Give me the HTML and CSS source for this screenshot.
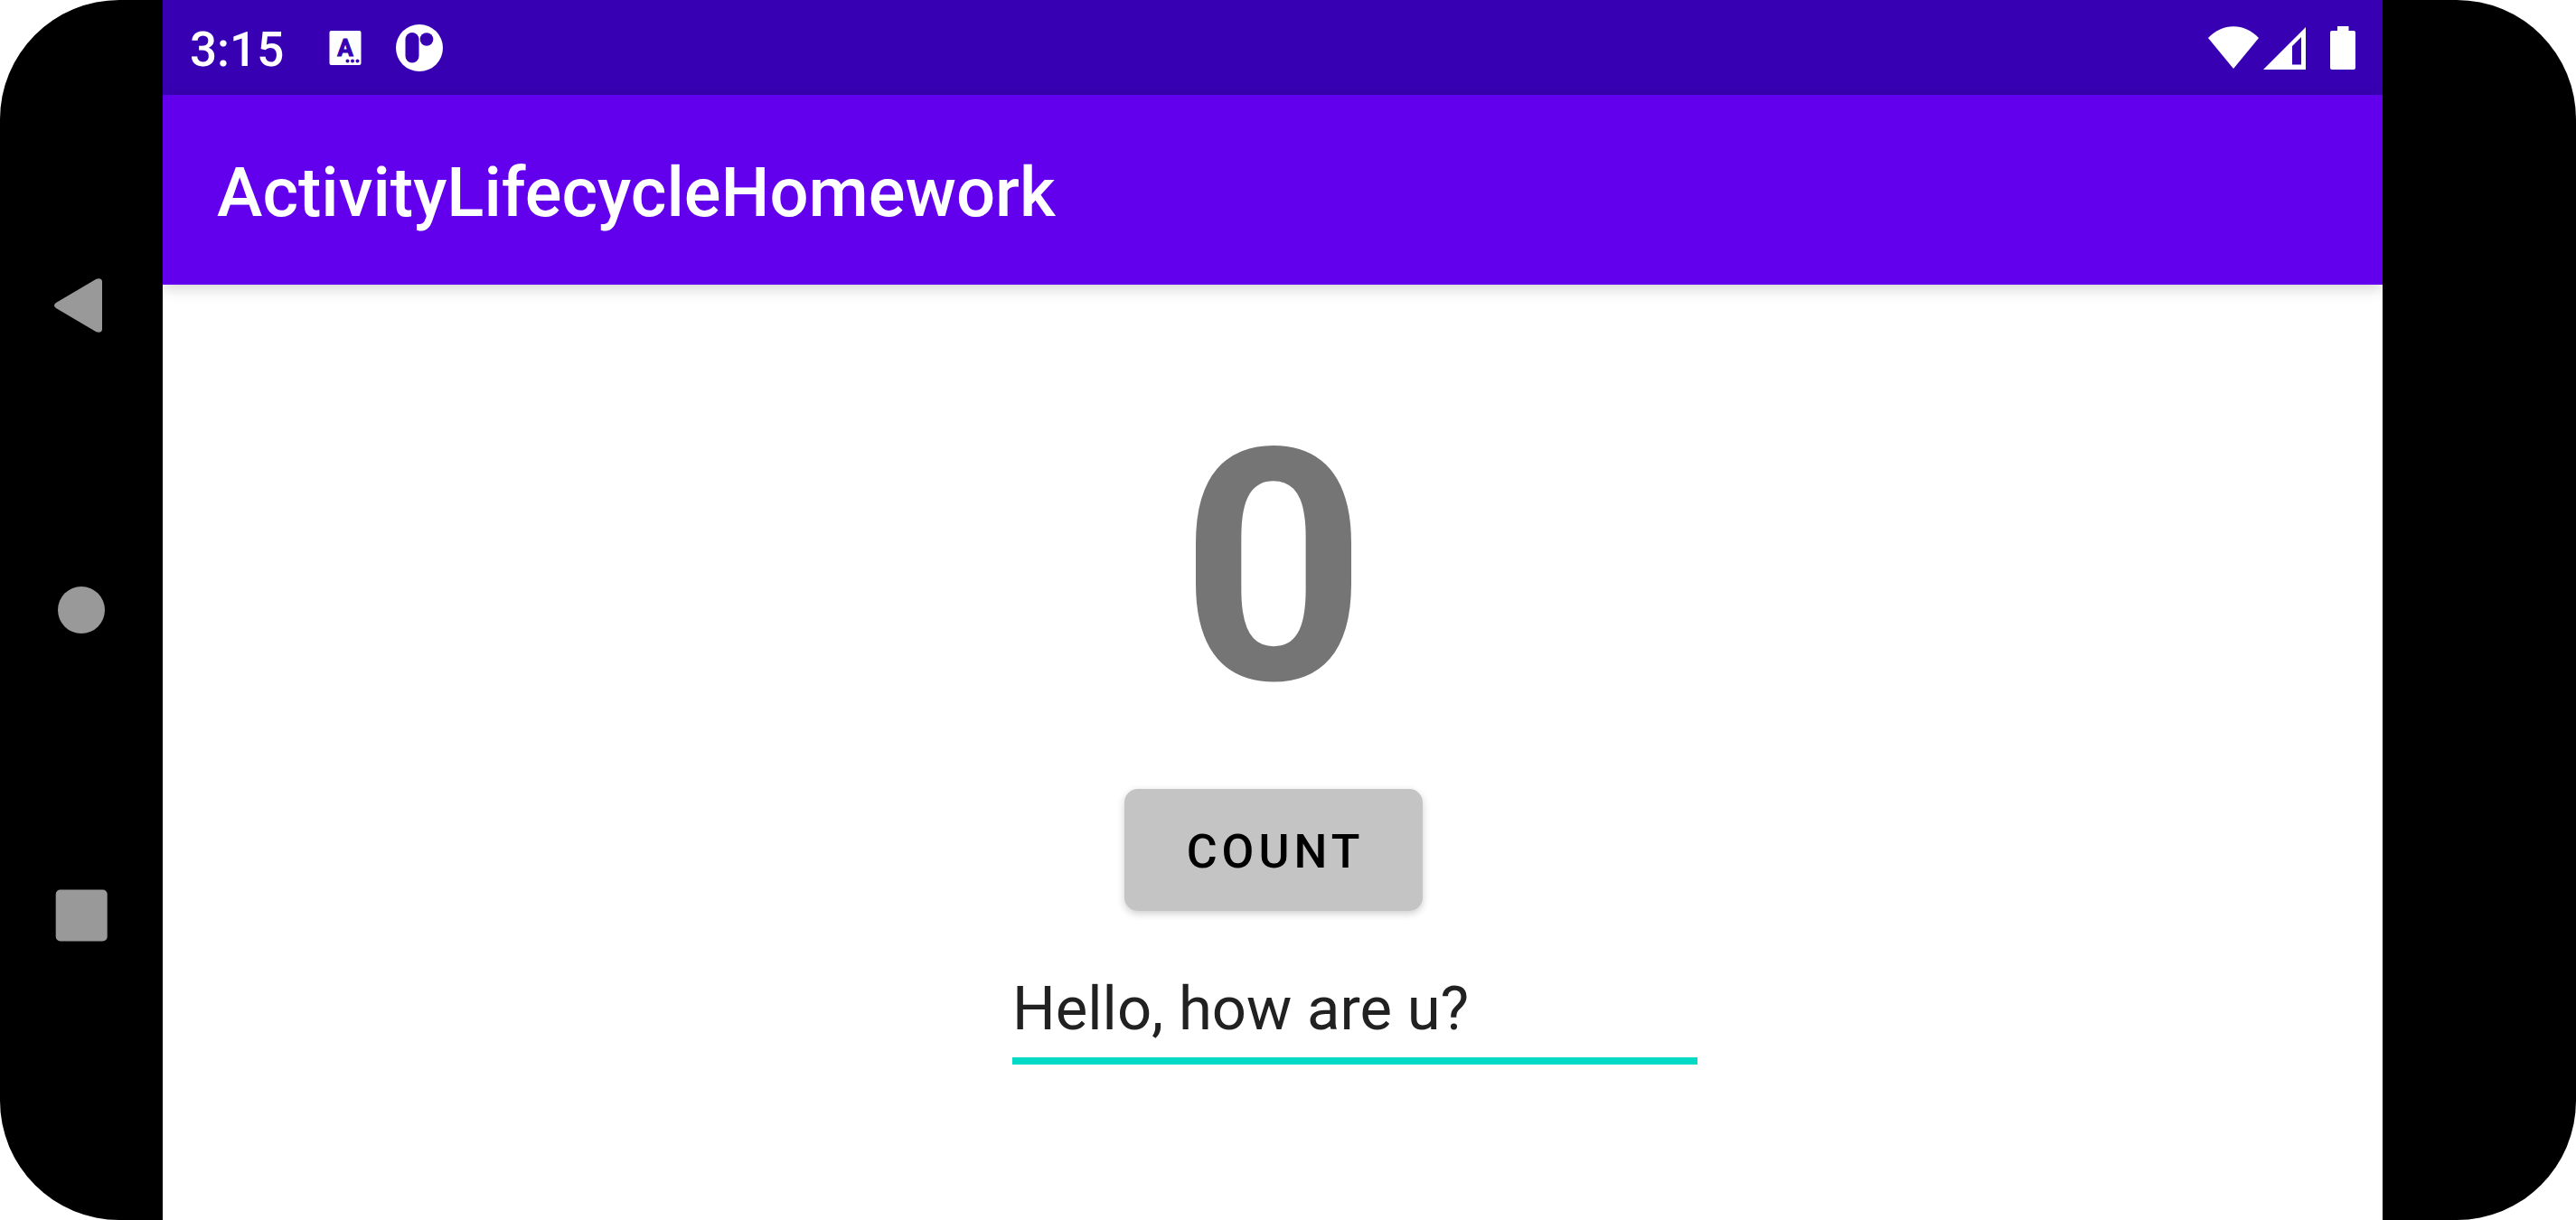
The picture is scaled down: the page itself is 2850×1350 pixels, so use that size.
FILE: index.html
```html
<!DOCTYPE html>
<html lang="en">
<head>
<meta charset="utf-8">
<meta name="viewport" content="width=device-width, initial-scale=1">
<title>ActivityLifecycleHomework</title>
<link rel="stylesheet" href="styles.css">
</head>
<body>
<div class="device">
  <nav class="nav-bar" aria-label="System navigation">
    <button class="nav-button nav-back" type="button" aria-label="Back">
      <svg width="60" height="60" viewBox="0 0 60 60"><path d="M2 27 46.500 .7Q53 -1 53 4V56Q53 61 46.500 59.300L2 33Q-2 30 2 27Z"/></svg>
    </button>
    <button class="nav-button nav-home" type="button" aria-label="Home">
      <svg width="60" height="60" viewBox="0 0 60 60"><circle cx="30" cy="30" r="26"/></svg>
    </button>
    <button class="nav-button nav-recent" type="button" aria-label="Overview">
      <svg width="60" height="60" viewBox="0 0 60 60"><rect x="1.700" y="1.500" width="57" height="57" rx="5"/></svg>
    </button>
  </nav>

  <div class="screen">
    <div class="status-bar">
      <time class="clock">3:15</time>
      <svg class="status-keyboard" width="36" height="40" viewBox="0 0 36 40" aria-hidden="true">
        <rect x=".5" y="1" width="35" height="38" rx="2" fill="#fff"/>
        <text class="keyboard-letter" x="18" y="29" text-anchor="middle">A</text>
        <g fill="#3700b3"><circle cx="20.500" cy="34.500" r="2"/><circle cx="26" cy="34.500" r="2"/><circle cx="31.500" cy="34.500" r="2"/></g>
      </svg>
      <svg class="status-app" width="52" height="52" viewBox="0 0 52 52" aria-hidden="true">
        <circle cx="26" cy="26" r="26" fill="#fff"/>
        <rect x="10.500" y="9" width="15" height="33.500" rx="7.500" fill="#3700b3"/>
        <circle cx="34" cy="16.500" r="7.300" fill="#3700b3"/>
      </svg>
      <div class="status-end">
        <svg width="56" height="48" viewBox="0 0 56 48" aria-hidden="true"><path fill="#fff" d="M0 13C16 -4 40 -4 56 13L28 47Z"/></svg>
        <svg class="status-signal" width="47" height="48" viewBox="0 0 47 48" aria-hidden="true"><path fill="#fff" fill-rule="evenodd" d="M0 48 47 1V48ZM32 22V42.500H42V12Z"/></svg>
        <svg class="status-battery" width="28" height="48" viewBox="0 0 28 48" aria-hidden="true"><path fill="#fff" d="M8 0H20.500V5H26Q28 5 28 7V46Q28 48 26 48H2Q0 48 0 46V7Q0 5 2 5H8Z"/></svg>
      </div>
    </div>

    <header class="app-bar">
      <h1 class="app-title">ActivityLifecycleHomework</h1>
    </header>

    <main class="content">
      <output class="counter" for="count">0</output>
      <button class="count-button" id="count" type="button">COUNT</button>
      <input class="message" type="text" value="Hello, how are u?" aria-label="Message" spellcheck="false">
    </main>
  </div>

  <div class="cutout"></div>
</div>
</body>
</html>
```

FILE: styles.css
```css
* {
  box-sizing: border-box;
}

body {
  margin: 0;
  background: #fff;
  font-family: Roboto, "Liberation Sans", sans-serif;
}

button,
input {
  font-family: inherit;
}

svg {
  display: block;
  flex: none;
}

/* Phone body, landscape */
.device {
  display: grid;
  grid-template-columns: 180px 1fr 214px;
  min-height: 100vh;
  overflow: hidden;
  border-radius: 132px;
  background: #000;
}

.nav-bar {
  display: grid;
  grid-template-rows: 1fr 2fr 2fr 2fr 1fr;
}

.nav-button {
  display: flex;
  align-items: center;
  justify-content: center;
  padding: 0;
  border: 0;
  background: none;
  fill: #999;
}

.nav-back {
  grid-row: 2;
}

.nav-home {
  grid-row: 3;
}

.nav-recent {
  grid-row: 4;
}

.screen {
  display: flex;
  flex-direction: column;
  min-width: 0;
  background: #fff;
}

.status-bar {
  display: flex;
  align-items: center;
  height: 105px;
  padding: 0 30px;
  background: #3700b3;
  color: #fff;
}

.clock {
  padding-top: 4px;
  font-size: 53px;
  font-weight: 500;
  line-height: 64px;
}

.status-keyboard {
  margin-left: 50px;
}

.keyboard-letter {
  fill: #3700b3;
  stroke: #3700b3;
  font-size: 26px;
  font-weight: 700;
}

.status-app {
  margin-left: 38px;
}

.status-end {
  display: flex;
  margin-left: auto;
}

.status-signal {
  margin-left: 5px;
}

.status-battery {
  margin-left: 27px;
}

.app-bar {
  display: flex;
  align-items: center;
  height: 210px;
  padding: 6px 60px 0;
  background: #6200ee;
  box-shadow: 0 4px 16px rgba(0, 0, 0, 0.18);
  color: #fff;
}

.app-title {
  margin: 0;
  font-size: 76px;
  font-weight: 500;
  line-height: 88px;
}

.content {
  display: flex;
  flex: 1;
  flex-direction: column;
  align-items: center;
  padding: 104px 60px 104px 62px;
}

.counter {
  color: #757575;
  font-size: 358px;
  font-weight: 700;
  line-height: 420px;
}

.count-button {
  min-width: 330px;
  height: 135px;
  margin-top: 34px;
  padding: 4px 56px 0 60px;
  border: 0;
  border-radius: 15px;
  background: #c4c4c4;
  box-shadow: 0 3px 8px rgba(0, 0, 0, 0.2);
  color: #000;
  font-size: 52px;
  font-weight: 500;
  letter-spacing: 5px;
}

.message {
  width: 758px;
  height: 102px;
  margin: 68px 0 0 180px;
  padding: 0 0 14px;
  border: 0;
  border-bottom: 8px solid #03dac5;
  outline: 0;
  background: none;
  color: #212121;
  font-size: 67px;
  line-height: 80px;
}
```
